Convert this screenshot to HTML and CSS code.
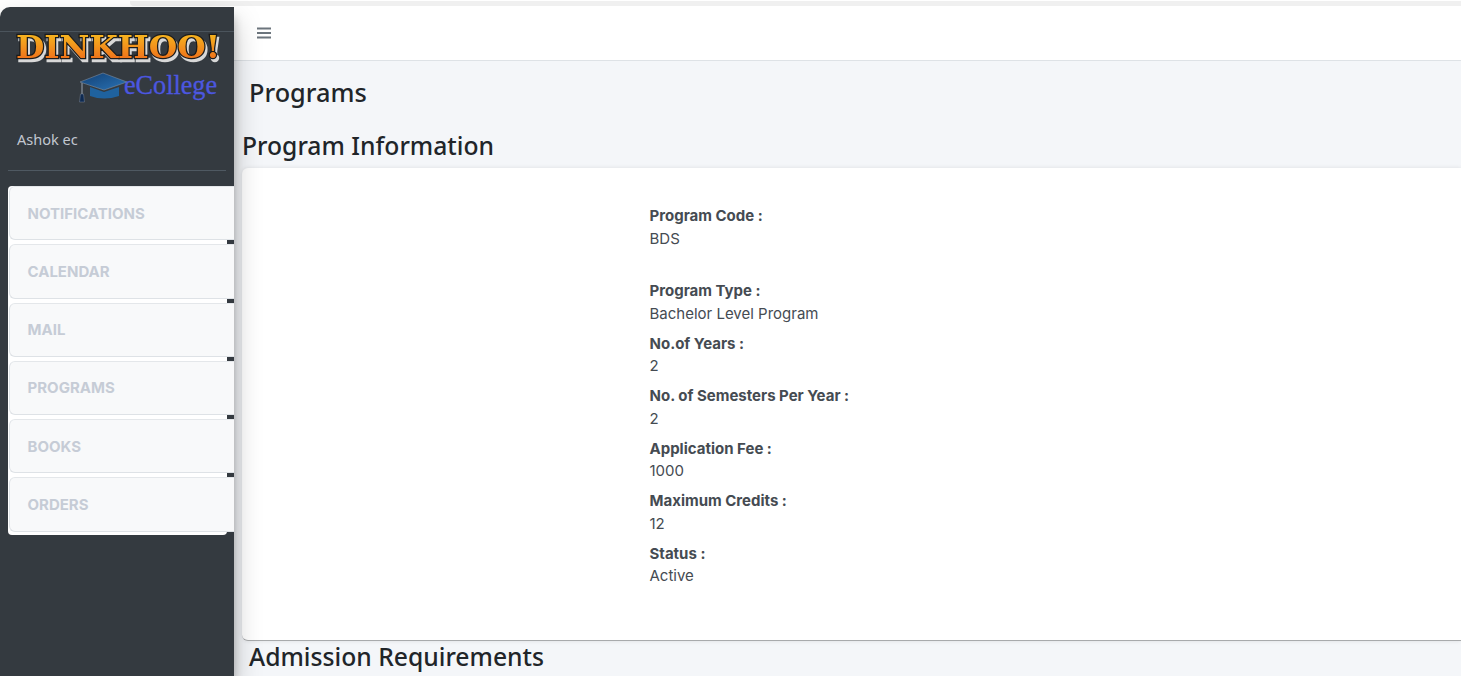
FILE: index.html
```html
<!DOCTYPE html>
<html lang="en">
<head>
<meta charset="utf-8">
<title>Programs</title>
<link rel="stylesheet" href="styles.css">
</head>
<body>
<div class="browser-strip"><div class="browser-band"></div></div>
<div class="app">
  <aside class="sidebar">
    <div class="brand">
      <svg class="logo" width="212" height="72" viewBox="0 0 212 72" xmlns="http://www.w3.org/2000/svg">
        <defs>
          <linearGradient id="gold" x1="0" y1="0" x2="0" y2="1">
            <stop offset="0" stop-color="#f8c51f"/>
            <stop offset="1" stop-color="#ec5f1a"/>
          </linearGradient>
          <linearGradient id="capTop" x1="0" y1="0" x2="1" y2="1">
            <stop offset="0" stop-color="#123f73"/>
            <stop offset="1" stop-color="#2a73b5"/>
          </linearGradient>
        </defs>
        <text class="logo-name" x="3" y="26" textLength="204" lengthAdjust="spacingAndGlyphs" fill="url(#gold)">DINKHOO!</text>
        <path d="M67 50 L90 41 L114 50 L91 58 Z" fill="url(#capTop)" stroke="#8d98a8" stroke-width=".5"/>
        <path d="M77 55 L91 60 L106 55 L106 64 Q91 69 77 64 Z" fill="#1f629f"/>
        <path d="M69 51 L69 62" stroke="#9aa4b2" stroke-width="1" fill="none"/>
        <path d="M67.500 62 h3 l1 8 h-5 Z" fill="#0e2a52" stroke="#8d98a8" stroke-width=".4"/>
        <text class="logo-college" x="111" y="62" textLength="93" lengthAdjust="spacingAndGlyphs">eCollege</text>
      </svg>
    </div>
    <div class="user">Ashok ec</div>
    <nav class="menu">
      <a class="menu-item">NOTIFICATIONS</a>
      <a class="menu-item">CALENDAR</a>
      <a class="menu-item">MAIL</a>
      <a class="menu-item">PROGRAMS</a>
      <a class="menu-item">BOOKS</a>
      <a class="menu-item">ORDERS</a>
    </nav>
  </aside>
  <main class="main">
    <header class="topbar">
      <svg class="burger" width="14" height="12" viewBox="0 0 14 12" xmlns="http://www.w3.org/2000/svg"><path d="M0 1.500h14M0 6h14M0 10.500h14" stroke="#6c757d" stroke-width="2"/></svg>
    </header>
    <div class="content">
      <h1 class="page-title">Programs</h1>
      <h2 class="section-title">Program Information</h2>
      <section class="card">
        <dl class="details">
          <div class="row row-wide"><dt>Program Code :</dt><dd>BDS</dd></div>
          <div class="row"><dt>Program Type :</dt><dd>Bachelor Level Program</dd></div>
          <div class="row"><dt>No.of Years :</dt><dd>2</dd></div>
          <div class="row"><dt>No. of Semesters Per Year :</dt><dd>2</dd></div>
          <div class="row"><dt>Application Fee :</dt><dd>1000</dd></div>
          <div class="row"><dt>Maximum Credits :</dt><dd>12</dd></div>
          <div class="row"><dt>Status :</dt><dd>Active</dd></div>
        </dl>
      </section>
      <h2 class="section-title indented">Admission Requirements</h2>
    </div>
  </main>
</div>
</body>
</html>
```
FILE: styles.css
```css
* { box-sizing: border-box; }
html, body { margin: 0; height: 100%; overflow: hidden; }
body { background: #fff; font-family: "Noto Sans", sans-serif; }
.browser-strip { height: 7px; padding: 1px 0 0 130px; }
.browser-band { height: 5px; background: #f0f0f0; border-bottom-left-radius: 4px; }
.app { display: flex; height: 669px; }
.sidebar { width: 234px; flex: none; background: #343a40; border-top-left-radius: 10px; padding-top: 24px; box-shadow: 0 14px 28px rgba(0,0,0,.25), 0 10px 10px rgba(0,0,0,.22); position: relative; z-index: 2; display: flex; flex-direction: column; }
.brand { border-top: 1px solid #4b545c; height: 87px; padding-left: 13px; }
.logo { display: block; }
.logo text { font-family: "DejaVu Serif", serif; font-weight: 700; font-size: 32px; }
.logo .logo-name { stroke: #1b1b1b; stroke-width: 2.500px; paint-order: stroke; filter: drop-shadow(2px 3px 0 #d8d8d8); }
.logo .logo-college { font-family: "Liberation Serif", serif; font-weight: 400; font-size: 28px; fill: #4c57e0; stroke: #4c57e0; stroke-width: .3px; }
.user { margin: 0 8px; height: 53px; padding: 11px 9px 0; font-size: 14.500px; line-height: 21px; color: #c2c7d0; border-bottom: 1px solid #4f5962; }
.menu { width: 219px; margin: 15px 0 0 8px; background: #fff; border-radius: 4px; padding-bottom: 3px; display: flex; flex-direction: column; gap: 4px; }
.menu-item { display: flex; align-items: center; height: 54.250px; padding-left: 17.500px; margin: 0 -7px 0 1px; background: #f8f9fa; border: 1px solid #dee2e6; border-top-color: #e4e7ea; border-right: 0; border-radius: 6px 0 0 6px; font-family: Inter, sans-serif; font-size: 15px; font-weight: 700; color: #c6ccd6; }
.main { flex: 1; min-width: 0; display: flex; flex-direction: column; background: #f4f6f9; }
.topbar { height: 54px; flex: none; background: #fff; border-bottom: 1px solid #dee2e6; display: flex; align-items: center; padding: 0 0 1px 23px; }
.burger { display: block; }
.content { padding-left: 8px; }
.page-title { margin: 0; height: 53px; padding: 13px 0 0 7px; font-size: 25.300px; font-weight: 500; line-height: 36px; color: #212529; }
.section-title { margin: 0; height: 54px; padding-top: 14px; font-size: 24.700px; font-weight: 500; line-height: 36px; color: #212529; }
.section-title.indented { padding: 0 0 0 7px; height: 36px; margin-top: -2px; }
.card { height: 473px; background: #fff; border-radius: 6px 0 0 6px; border-bottom: 1px solid #a8aaac; box-shadow: 0 0 4px rgba(0,0,0,.1); padding: 37px 0 0 407.500px; font-family: Inter, sans-serif; font-size: 15px; color: #454b52; }
.details { margin: 0; }
.row { height: 52.500px; line-height: 22.500px; }
.row-wide { height: 75px; }
.row dt { font-weight: 700; }
.row dd { margin: 0; }
```
